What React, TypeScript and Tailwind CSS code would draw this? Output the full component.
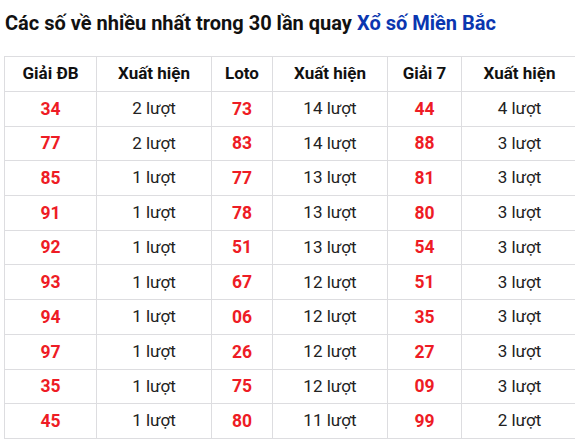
const rows: [string, string, string, string, string, string][] = [
  ["34", "2 lượt", "73", "14 lượt", "44", "4 lượt"],
  ["77", "2 lượt", "83", "14 lượt", "88", "3 lượt"],
  ["85", "1 lượt", "77", "13 lượt", "81", "3 lượt"],
  ["91", "1 lượt", "78", "13 lượt", "80", "3 lượt"],
  ["92", "1 lượt", "51", "13 lượt", "54", "3 lượt"],
  ["93", "1 lượt", "67", "12 lượt", "51", "3 lượt"],
  ["94", "1 lượt", "06", "12 lượt", "35", "3 lượt"],
  ["97", "1 lượt", "26", "12 lượt", "27", "3 lượt"],
  ["35", "1 lượt", "75", "12 lượt", "09", "3 lượt"],
  ["45", "1 lượt", "80", "11 lượt", "99", "2 lượt"],
];

const headers = ["Giải ĐB", "Xuất hiện", "Loto", "Xuất hiện", "Giải 7", "Xuất hiện"];
const widths = ["w-[92px]", "w-[115px]", "w-[61px]", "w-[115px]", "w-[74px]", "w-[116px]"];

export default function App() {
  return (
    <div className="w-[575px] h-[439px] overflow-hidden bg-white font-['Roboto',sans-serif] text-[#222]">
      <h2 className="pl-[5px] pt-[10px] text-[20px] leading-[26px] font-bold text-[#111]">
        Các số về nhiều nhất trong 30 lần quay <span className="text-[#0a36b0]">Xổ số Miền Bắc</span>
      </h2>
      <table className="ml-[4px] mt-[20px] border-collapse table-fixed w-[573px]">
        <thead>
          <tr className="h-[35px]">
            {headers.map((h, i) => (
              <th key={i} className={`${widths[i]} border border-[#dddde0] p-0 text-[17px] font-bold text-[#111]`}>
                {h}
              </th>
            ))}
          </tr>
        </thead>
        <tbody>
          {rows.map((r, ri) => (
            <tr key={ri} className="h-[34.7px]">
              {r.map((c, ci) => (
                <td
                  key={ci}
                  className={`border border-[#dddde0] p-0 text-center ${
                    ci % 2 === 0 ? "text-[17.5px] font-bold text-[#ee1c25]" : "text-[17px] text-[#222]"
                  }`}
                >
                  {c}
                </td>
              ))}
            </tr>
          ))}
        </tbody>
      </table>
    </div>
  );
}
